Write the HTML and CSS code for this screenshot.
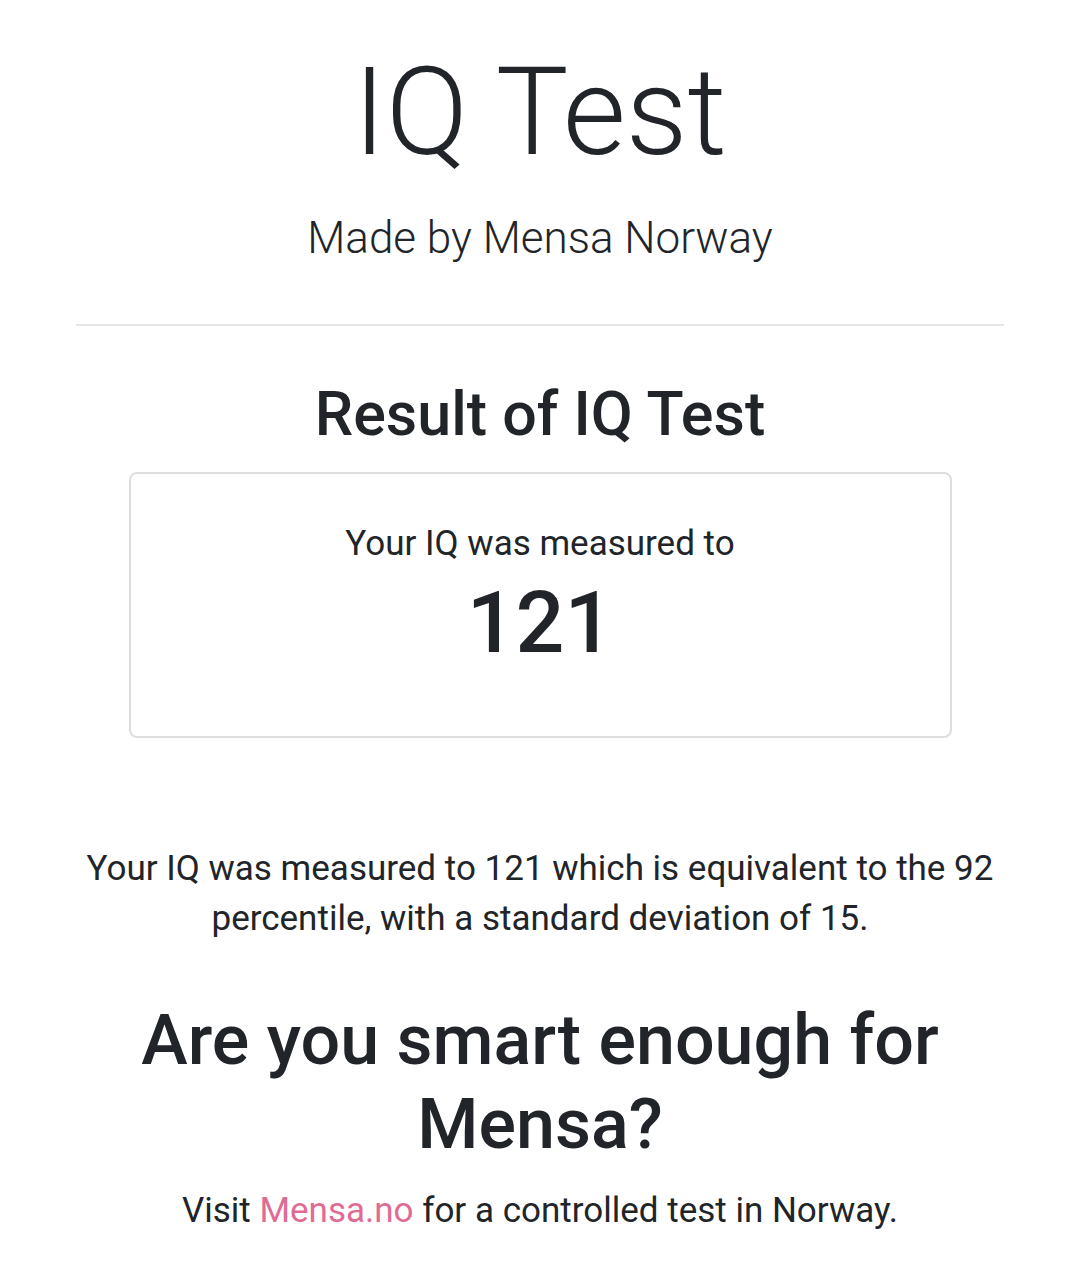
FILE: index.html
```html
<!DOCTYPE html>
<html lang="en">
<head>
<meta charset="utf-8">
<title>IQ Test</title>
<link rel="stylesheet" href="styles.css">
</head>
<body>
<main class="container">
  <header class="masthead">
    <h1 class="title">IQ Test</h1>
    <p class="subtitle">Made by Mensa Norway</p>
  </header>
  <hr class="divider">
  <section class="result">
    <h2 class="result-heading">Result of IQ Test</h2>
    <div class="card">
      <p class="card-label">Your IQ was measured to</p>
      <p class="card-score">121</p>
    </div>
    <p class="summary">Your IQ was measured to 121 which is equivalent to the 92 percentile, with a standard deviation of 15.</p>
    <h2 class="cta-heading">Are you smart enough for Mensa?</h2>
    <p class="cta-text">Visit <a class="link" href="#">Mensa.no</a> for a controlled test in Norway.</p>
  </section>
</main>
</body>
</html>
```

FILE: styles.css
```css
html, body {
  margin: 0;
  padding: 0;
  background: #ffffff;
}

body {
  font-family: Roboto, "Liberation Sans", Arial, sans-serif;
  color: #212529;
  font-size: 35px;
  line-height: 50px;
}

.container {
  padding: 40px 76px 0;
  text-align: center;
}

.masthead {
  display: flex;
  flex-direction: column;
  align-items: center;
}

.title {
  margin: 0;
  font-size: 122px;
  font-weight: 300;
  line-height: 1.2;
}

.subtitle {
  margin: 19px 0 0;
  font-size: 44px;
  font-weight: 300;
  line-height: 1.5;
}

.divider {
  margin: 53px 0 0;
  border: 0;
  border-top: 2px solid #e6e6e6;
  height: 0;
}

.result-heading {
  margin: 52px 0 0;
  font-size: 61px;
  font-weight: 500;
  line-height: 1.2;
}

.card {
  box-sizing: border-box;
  width: 823px;
  margin: 20px auto 0;
  border: 2px solid #dedede;
  border-radius: 8px;
  padding: 45px 20px 62px;
}

.card-label {
  margin: 0;
  font-size: 35px;
  line-height: 50px;
}

.card-score {
  margin: 2px 0 0;
  font-size: 86px;
  font-weight: 500;
  line-height: 1.2;
}

.summary {
  margin: 106px 0 0;
  font-size: 35px;
  line-height: 50px;
}

.cta-heading {
  margin: 54px 0 0;
  font-size: 70px;
  font-weight: 500;
  line-height: 84px;
}

.cta-text {
  margin: 20px 0 0;
  font-size: 35px;
  line-height: 50px;
}

.link {
  color: #e06c94;
  text-decoration: none;
}
```
